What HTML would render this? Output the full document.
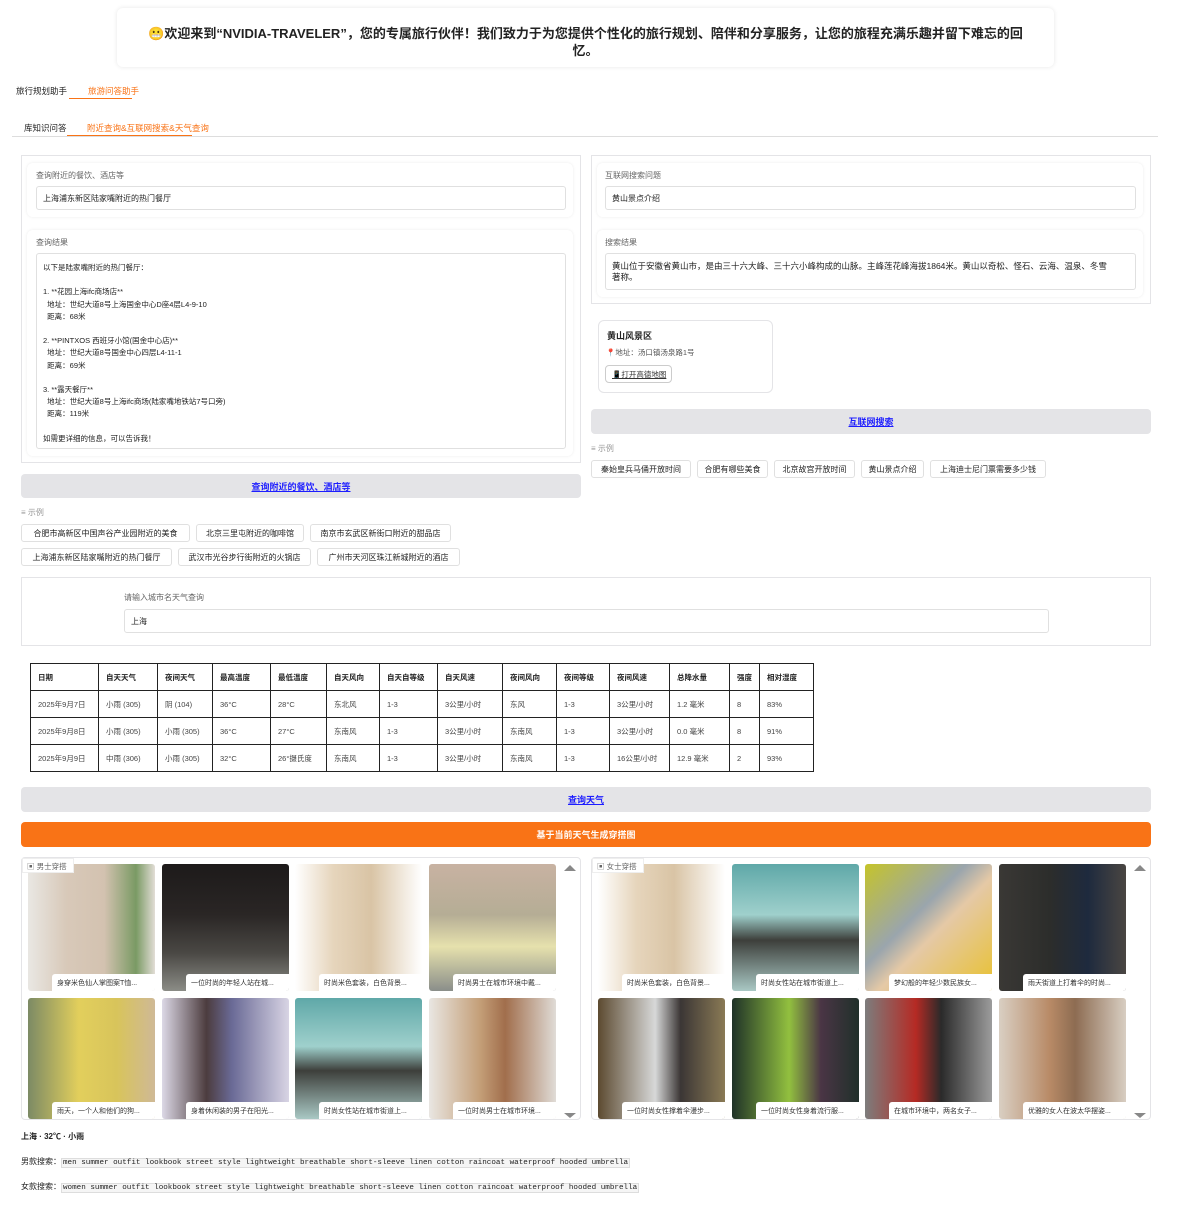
<!DOCTYPE html><html><head><meta charset="utf-8"><style>
*{box-sizing:border-box;margin:0;padding:0}
body{width:1191px;height:1229px;background:#fff;position:relative;font-family:"Liberation Sans","Noto Sans CJK SC",sans-serif;font-size:8px;color:#222;overflow:hidden}
.a{position:absolute}
.box{position:absolute;border:1px solid #e4e4e7;background:#fff}
.blk{position:absolute;border-radius:6px;background:#fff;box-shadow:0 0 3px rgba(0,0,0,.08)}
.lbl{position:absolute;color:#666;font-size:8px}
.inp{position:absolute;border:1px solid #e0e0e0;border-radius:3px;background:#fff;padding:0 6px;font-size:8px;display:flex;align-items:center}
.btn{position:absolute;background:#e4e4e7;border-radius:4px;color:#1d1dff;font-weight:bold;font-size:9px;display:flex;align-items:center;justify-content:center;text-decoration:underline}
.chip{position:absolute;border:1px solid #e0e0e0;border-radius:3px;height:18px;font-size:8px;padding:0 5px;display:flex;align-items:center;justify-content:center;background:#fff;white-space:nowrap}
table{border-collapse:collapse;font-size:7.5px}
td,th{border:1px solid #222;padding:0 0 0 7px;text-align:left;height:27px;color:#444;font-weight:normal}
th{font-weight:bold;color:#222}
.tile{position:absolute;width:127px;border-radius:3px;overflow:hidden}
.cap{position:absolute;right:0;bottom:0;width:103px;height:17px;background:#fff;font-size:7px;padding-left:5px;display:flex;align-items:center;color:#333;white-space:nowrap;overflow:hidden;border-radius:3px 0 0 0}
.code{border:1px solid #ddd;background:#f5f5f5;font-family:"Liberation Mono",monospace;font-size:7.6px;padding:0 1px}
</style></head><body>
<div class="a" style="left:117px;top:8px;width:937px;height:59px;border-radius:6px;box-shadow:0 0 5px rgba(0,0,0,.1);font-weight:bold;font-size:13px;text-align:center;line-height:17px;padding-top:17px;white-space:nowrap">😬欢迎来到“NVIDIA-TRAVELER”，您的专属旅行伙伴！我们致力于为您提供个性化的旅行规划、陪伴和分享服务，让您的旅程充满乐趣并留下难忘的回<br>忆。</div>
<div class="a" style="left:16px;top:85px;font-size:8.5px">旅行规划助手</div>
<div class="a" style="left:88px;top:85px;font-size:8.5px;color:#f97316">旅游问答助手</div>
<div class="a" style="left:69px;top:98px;width:63px;height:1px;background:#f97316"></div>
<div class="a" style="left:24px;top:122px;font-size:8.5px">库知识问答</div>
<div class="a" style="left:87px;top:122px;font-size:8.5px;color:#f97316">附近查询&amp;互联网搜索&amp;天气查询</div>
<div class="a" style="left:12px;top:136px;width:1146px;height:1px;background:#ddd"></div>
<div class="a" style="left:67px;top:135px;width:125px;height:1px;background:#f97316"></div>

<div class="box" style="left:21px;top:155px;width:560px;height:308px"></div>
<div class="blk" style="left:27px;top:163px;width:546px;height:54px"></div>
<div class="lbl" style="left:36px;top:170px">查询附近的餐饮、酒店等</div>
<div class="inp" style="left:36px;top:186px;width:530px;height:24px">上海浦东新区陆家嘴附近的热门餐厅</div>
<div class="blk" style="left:27px;top:230px;width:546px;height:226px"></div>
<div class="lbl" style="left:36px;top:237px">查询结果</div>
<div class="inp" style="left:36px;top:253px;width:530px;height:196px;display:block;padding-top:8px;line-height:12.2px;font-size:7.5px">以下是陆家嘴附近的热门餐厅：<br><br>1. **花园上海ifc商场店**<br>&nbsp;&nbsp;地址：世纪大道8号上海国金中心D座4层L4-9-10<br>&nbsp;&nbsp;距离：68米<br><br>2. **PINTXOS 西班牙小馆(国金中心店)**<br>&nbsp;&nbsp;地址：世纪大道8号国金中心四层L4-11-1<br>&nbsp;&nbsp;距离：69米<br><br>3. **露天餐厅**<br>&nbsp;&nbsp;地址：世纪大道8号上海ifc商场(陆家嘴地铁站7号口旁)<br>&nbsp;&nbsp;距离：119米<br><br>如需更详细的信息，可以告诉我！</div>
<div class="btn" style="left:21px;top:474px;width:560px;height:24px">查询附近的餐饮、酒店等</div>
<div class="lbl" style="left:21px;top:507px;color:#999">≡ 示例</div>
<div class="chip" style="left:21px;top:524px;width:169px">合肥市高新区中国声谷产业园附近的美食</div>
<div class="chip" style="left:196px;top:524px;width:108px">北京三里屯附近的咖啡馆</div>
<div class="chip" style="left:310px;top:524px;width:141px">南京市玄武区新街口附近的甜品店</div>
<div class="chip" style="left:21px;top:548px;width:151px">上海浦东新区陆家嘴附近的热门餐厅</div>
<div class="chip" style="left:178px;top:548px;width:133px">武汉市光谷步行街附近的火锅店</div>
<div class="chip" style="left:317px;top:548px;width:143px">广州市天河区珠江新城附近的酒店</div>

<div class="box" style="left:591px;top:155px;width:560px;height:149px"></div>
<div class="blk" style="left:597px;top:163px;width:546px;height:54px"></div>
<div class="lbl" style="left:605px;top:170px">互联网搜索问题</div>
<div class="inp" style="left:605px;top:186px;width:531px;height:24px">黄山景点介绍</div>
<div class="blk" style="left:597px;top:230px;width:546px;height:67px"></div>
<div class="lbl" style="left:605px;top:237px">搜索结果</div>
<div class="inp" style="left:605px;top:253px;width:531px;height:37px;display:block;padding-top:7px;line-height:11px;font-size:8.5px">黄山位于安徽省黄山市，是由三十六大峰、三十六小峰构成的山脉。主峰莲花峰海拔1864米。黄山以奇松、怪石、云海、温泉、冬雪<br>著称。</div>
<div class="a" style="left:598px;top:320px;width:175px;height:73px;border:1px solid #e4e4e7;border-radius:6px"></div>
<div class="a" style="left:607px;top:329px;font-weight:bold;font-size:9px">黄山风景区</div>
<div class="a" style="left:606px;top:347px;font-size:7.5px;color:#555">📍地址：汤口镇汤泉路1号</div>
<div class="a" style="left:605px;top:365px;width:67px;height:18px;border:1px solid #ccc;border-radius:4px;font-size:7.5px;padding:3px 0 0 6px;text-decoration:underline;color:#333">📱打开高德地图</div>
<div class="btn" style="left:591px;top:409px;width:560px;height:25px">互联网搜索</div>
<div class="lbl" style="left:591px;top:443px;color:#999">≡ 示例</div>
<div class="chip" style="left:591px;top:460px;width:100px">秦始皇兵马俑开放时间</div>
<div class="chip" style="left:697px;top:460px;width:71px">合肥有哪些美食</div>
<div class="chip" style="left:774px;top:460px;width:81px">北京故宫开放时间</div>
<div class="chip" style="left:861px;top:460px;width:63px">黄山景点介绍</div>
<div class="chip" style="left:930px;top:460px;width:116px">上海迪士尼门票需要多少钱</div>

<div class="box" style="left:21px;top:577px;width:1130px;height:69px"></div>
<div class="lbl" style="left:124px;top:592px">请输入城市名天气查询</div>
<div class="inp" style="left:124px;top:609px;width:925px;height:24px">上海</div>

<table class="a" style="left:30px;top:663px;width:784px">
<tr><th style="width:68px">日期</th><th style="width:59px">自天天气</th><th style="width:55px">夜间天气</th><th style="width:58px">最高温度</th><th style="width:56px">最低温度</th><th style="width:53px">自天风向</th><th style="width:58px">自天自等级</th><th style="width:65px">自天风速</th><th style="width:54px">夜间风向</th><th style="width:53px">夜间等级</th><th style="width:60px">夜间风速</th><th style="width:60px">总降水量</th><th style="width:30px">强度</th><th>相对湿度</th></tr>
<tr><td>2025年9月7日</td><td>小雨 (305)</td><td>阴 (104)</td><td>36°C</td><td>28°C</td><td>东北风</td><td>1-3</td><td>3公里/小时</td><td>东风</td><td>1-3</td><td>3公里/小时</td><td>1.2 毫米</td><td>8</td><td>83%</td></tr>
<tr><td>2025年9月8日</td><td>小雨 (305)</td><td>小雨 (305)</td><td>36°C</td><td>27°C</td><td>东南风</td><td>1-3</td><td>3公里/小时</td><td>东南风</td><td>1-3</td><td>3公里/小时</td><td>0.0 毫米</td><td>8</td><td>91%</td></tr>
<tr><td>2025年9月9日</td><td>中雨 (306)</td><td>小雨 (305)</td><td>32°C</td><td>26°摄氏度</td><td>东南风</td><td>1-3</td><td>3公里/小时</td><td>东南风</td><td>1-3</td><td>16公里/小时</td><td>12.9 毫米</td><td>2</td><td>93%</td></tr>
</table>

<div class="btn" style="left:21px;top:787px;width:1130px;height:25px">查询天气</div>
<div class="a" style="left:21px;top:822px;width:1130px;height:25px;background:#f97316;border-radius:4px;color:#fff;font-weight:bold;font-size:9px;display:flex;align-items:center;justify-content:center">基于当前天气生成穿搭图</div>

<div class="box" style="left:21px;top:857px;width:560px;height:263px;border-radius:4px"></div>
<div class="a" style="left:22px;top:858px;width:52px;height:15px;background:#fff;border:1px solid #eee;font-size:7.5px;color:#666;padding:2px 4px;z-index:3">▣ 男士穿搭</div>
<div class="a" style="left:564px;top:865px;width:0;height:0;border:6px solid transparent;border-bottom:6px solid #888;border-top:0"></div>
<div class="a" style="left:564px;top:1113px;width:0;height:0;border:6px solid transparent;border-top:5px solid #888;border-bottom:0"></div>
<div class="tile" style="left:28px;top:864px;height:127px;background:linear-gradient(90deg,#e9e7e3,#d8c9b9 30%,#d3c2b0 60%,#7a9a64 85%,#e2ddd6)"><div class="cap">身穿米色仙人掌图案T恤...</div></div>
<div class="tile" style="left:162px;top:864px;height:127px;background:linear-gradient(180deg,#1d1a1a 0,#2a2625 40%,#4a4844 70%,#8b8c86)"><div class="cap">一位时尚的年轻人站在城...</div></div>
<div class="tile" style="left:295px;top:864px;height:127px;background:linear-gradient(90deg,#fff,#e6d5bc 30%,#d9c4a5 60%,#fff)"><div class="cap">时尚米色套装，白色背景...</div></div>
<div class="tile" style="left:429px;top:864px;height:127px;background:linear-gradient(180deg,#c8b2a2,#b5ad95 40%,#e6e1ad 65%,#8a8e8a)"><div class="cap">时尚男士在城市环境中戴...</div></div>
<div class="tile" style="left:28px;top:998px;height:121px;background:linear-gradient(90deg,#7c8a65,#e2cf5c 40%,#d8c45b 70%,#cfb996)"><div class="cap">雨天，一个人和他们的狗...</div></div>
<div class="tile" style="left:162px;top:998px;height:121px;background:linear-gradient(90deg,#dcd8e6,#4c3c3e 35%,#6a6a96 55%,#d8d4e4)"><div class="cap">身着休闲装的男子在阳光...</div></div>
<div class="tile" style="left:295px;top:998px;height:121px;background:linear-gradient(180deg,#5fa8a8,#9fd0cc 40%,#3d3f3b 60%,#a9c8c4)"><div class="cap">时尚女性站在城市街道上...</div></div>
<div class="tile" style="left:429px;top:998px;height:121px;background:linear-gradient(90deg,#e9e6e2,#c49f78 40%,#a16e4c 60%,#e0dcd7)"><div class="cap">一位时尚男士在城市环境...</div></div>

<div class="box" style="left:591px;top:857px;width:560px;height:263px;border-radius:4px"></div>
<div class="a" style="left:592px;top:858px;width:52px;height:15px;background:#fff;border:1px solid #eee;font-size:7.5px;color:#666;padding:2px 4px;z-index:3">▣ 女士穿搭</div>
<div class="a" style="left:1134px;top:865px;width:0;height:0;border:6px solid transparent;border-bottom:6px solid #888;border-top:0"></div>
<div class="a" style="left:1134px;top:1113px;width:0;height:0;border:6px solid transparent;border-top:5px solid #888;border-bottom:0"></div>
<div class="tile" style="left:598px;top:864px;height:127px;background:linear-gradient(90deg,#fff,#e6d5bc 30%,#d9c4a5 60%,#fff)"><div class="cap">时尚米色套装，白色背景...</div></div>
<div class="tile" style="left:732px;top:864px;height:127px;background:linear-gradient(180deg,#5fa8a8,#9fd0cc 40%,#3d3f3b 60%,#a9c8c4)"><div class="cap">时尚女性站在城市街道上...</div></div>
<div class="tile" style="left:865px;top:864px;height:127px;background:linear-gradient(135deg,#c5c42a,#9aa5ad 40%,#e5c9a6 55%,#e8c12e)"><div class="cap">梦幻般的年轻少数民族女...</div></div>
<div class="tile" style="left:999px;top:864px;height:127px;background:linear-gradient(90deg,#3a3835,#2c2d2b 40%,#1e2a3e 70%,#4a4642)"><div class="cap">雨天街道上打着伞的时尚...</div></div>
<div class="tile" style="left:598px;top:998px;height:121px;background:linear-gradient(90deg,#5c4a30,#d7d8d8 45%,#3b3635 65%,#8a7a55)"><div class="cap">一位时尚女性撑着伞漫步...</div></div>
<div class="tile" style="left:732px;top:998px;height:121px;background:linear-gradient(90deg,#1f3228,#92c03f 45%,#4a3545 70%,#20302a)"><div class="cap">一位时尚女性身着流行服...</div></div>
<div class="tile" style="left:865px;top:998px;height:121px;background:linear-gradient(90deg,#7d7d7d,#b52a24 40%,#2a2a2a 60%,#9c9c9c)"><div class="cap">在城市环境中，两名女子...</div></div>
<div class="tile" style="left:999px;top:998px;height:121px;background:linear-gradient(90deg,#d9cfc3,#b88a66 40%,#8d6c52 60%,#d8cec2)"><div class="cap">优雅的女人在波太华摆姿...</div></div>

<div class="a" style="left:21px;top:1131px;font-weight:bold;font-size:8px">上海 · 32℃ · 小雨</div>
<div class="a" style="left:21px;top:1156px;font-size:8px">男款搜索：<span class="code">men summer outfit lookbook street style lightweight breathable short-sleeve linen cotton raincoat waterproof hooded umbrella</span></div>
<div class="a" style="left:21px;top:1181px;font-size:8px">女款搜索：<span class="code">women summer outfit lookbook street style lightweight breathable short-sleeve linen cotton raincoat waterproof hooded umbrella</span></div>
</body></html>
